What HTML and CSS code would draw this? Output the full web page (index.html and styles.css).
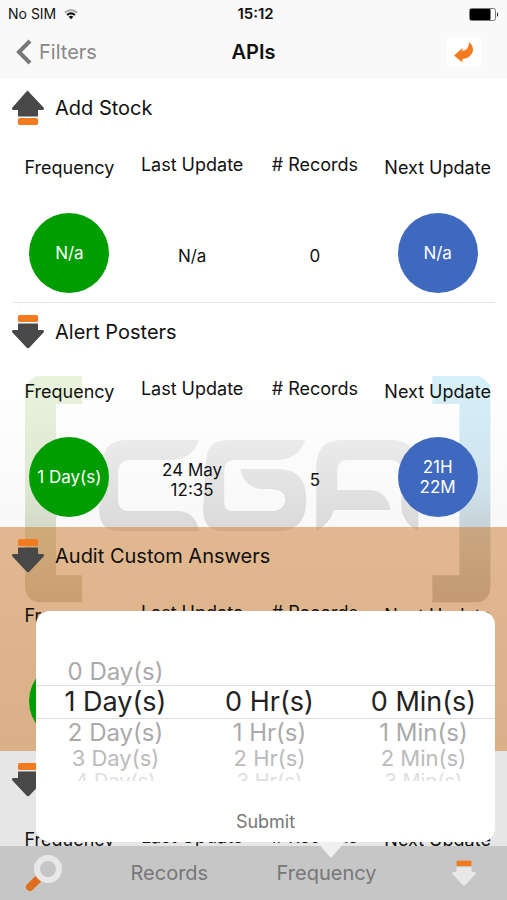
FILE: index.html
```
<!DOCTYPE html>
<html lang="en">
<head>
<meta charset="utf-8">
<meta name="viewport" content="width=device-width, initial-scale=1">
<title>APIs</title>
<link rel="stylesheet" href="styles.css">
</head>
<body>
<svg class="sprites" aria-hidden="true">
  <symbol id="arrow-up" viewBox="0 0 34 36">
    <path class="icon-body" d="M17 1 L33 18 Q33.500 20 31.500 20 H27 V26.500 H7 V20 H2.500 Q.5 20 1 18 L15.500 1.500 Q17 .2 18.500 1.500Z"/>
    <rect class="icon-accent" x="7" y="28" width="20" height="7" rx="1.500"/>
  </symbol>
  <symbol id="arrow-down" viewBox="0 0 34 36">
    <rect class="icon-accent" x="7" y="1" width="20" height="7" rx="1.500"/>
    <path class="icon-body" d="M7 9.500 H27 V16 H31.500 Q33.500 16 33 18 L18.500 33.500 Q17 34.800 15.500 33.500 L1 18 Q.5 16 2.500 16 H7Z"/>
  </symbol>
</svg>
<div class="app">
  <header class="header">
    <div class="status">
      <span class="carrier">No SIM
        <svg class="wifi" viewBox="0 0 14 11" aria-hidden="true"><path class="wifi-faint" d="M.8 3.800 Q7 -1.500 13.200 3.800"/><path class="wifi-on" d="M3 6 Q7 2.700 11 6"/><path d="M4.600 7.700 Q7 5.700 9.400 7.700 L7 10.300Z"/></svg>
      </span>
      <time class="clock">15:12</time>
      <svg class="battery" viewBox="0 0 30 13" aria-hidden="true"><rect class="battery-shell" x=".5" y=".5" width="26" height="12" rx="2"/><rect x="1" y="1" width="20.500" height="11" rx="1"/><path d="M28 4 Q30 6.500 28 9Z"/></svg>
    </div>
    <nav class="nav">
      <button class="back" type="button"><svg class="chevron" viewBox="0 0 16 26" aria-hidden="true"><path d="M14 2 L3 13 L14 24"/></svg>Filters</button>
      <h1 class="title">APIs</h1>
      <button class="reply" type="button" aria-label="Reset"><svg viewBox="0 0 22 22" aria-hidden="true"><path class="icon-accent" d="M1 14.500 L9.500 7 V10 Q16.500 8.500 16 1 Q20.500 4.500 20 10 Q18 17 9.500 18 V21.500Z"/></svg></button>
    </nav>
  </header>

  <main class="list">
    <svg class="watermark" viewBox="24 376 466 227" aria-hidden="true">
      <defs>
        <linearGradient id="lime" x1="0" y1="0" x2="0" y2="1"><stop offset="0" stop-color="#eaf3dc"/><stop offset=".5" stop-color="#dde6d2"/><stop offset="1" stop-color="#c2c2b8"/></linearGradient>
        <linearGradient id="sky" x1="0" y1="0" x2="0" y2="1"><stop offset="0" stop-color="#d6f1f9"/><stop offset=".5" stop-color="#cfe2ea"/><stop offset="1" stop-color="#b4b4b6"/></linearGradient>
        <linearGradient id="steel" x1="0" y1="0" x2="0" y2="1"><stop offset="0" stop-color="#ebebeb"/><stop offset="1" stop-color="#d9d9d9"/></linearGradient>
      </defs>
      <path fill="url(#lime)" d="M81 376 H36 Q32 376 24 386 V588 Q26 601 38 602 H81 V575 H55 V404 H81Z"/>
      <path fill="url(#sky)" d="M431 376 H477 Q481 376 489 386 V588 Q487 601 476 602 H431 V575 H458 V404 H431Z"/>
      <path fill="url(#steel)" d="M198 440 H125 Q104 440 102 460 L98 508 Q97 531 119 531 H198 Q194 511 176 511 H128 Q117 511 117 500 V471 Q118 460 130 460 H172 Q192 458 198 440Z"/>
      <path fill="url(#steel)" d="M304 440 H227 Q206 440 205 460 L202 508 Q201 531 222 531 H277 Q305 531 305 500 Q305 469 277 469 H239 Q244 489 262 489 H270 Q284 490 284 500 Q283 511 270 511 H232 Q223 511 223 503 V471 Q223 460 234 460 H278 Q298 458 304 440Z"/>
      <path fill="url(#steel)" d="M315 531 V466 Q316 440 340 440 H392 Q416 441 417 468 V531 Q400 522 400 505 V471 Q399 460 388 460 H347 Q336 460 336 471 V490 H368 Q386 491 389 510 H333 Q328 524 315 531Z"/>
    </svg>

    <article class="api">
      <h2 class="api-name"><svg class="api-icon" aria-hidden="true"><use href="#arrow-up"/></svg>Add Stock</h2>
      <table class="stats">
        <thead><tr><th>Frequency</th><th>Last Update</th><th># Records</th><th>Next Update</th></tr></thead>
        <tbody><tr><td><span class="disc disc-green">N/a</span></td><td>N/a</td><td>0</td><td><span class="disc disc-blue">N/a</span></td></tr></tbody>
      </table>
    </article>

    <article class="api">
      <h2 class="api-name"><svg class="api-icon" aria-hidden="true"><use href="#arrow-down"/></svg>Alert Posters</h2>
      <table class="stats">
        <thead><tr><th>Frequency</th><th>Last Update</th><th># Records</th><th>Next Update</th></tr></thead>
        <tbody><tr><td><span class="disc disc-green">1 Day(s)</span></td><td>24 May<br>12:35</td><td>5</td><td><span class="disc disc-blue">21H<br>22M</span></td></tr></tbody>
      </table>
    </article>

    <article class="api api-selected">
      <h2 class="api-name"><svg class="api-icon" aria-hidden="true"><use href="#arrow-down"/></svg>Audit Custom Answers</h2>
      <table class="stats">
        <thead><tr><th>Frequency</th><th>Last Update</th><th># Records</th><th>Next Update</th></tr></thead>
        <tbody><tr><td><span class="disc disc-green"></span></td><td></td><td></td><td></td></tr></tbody>
      </table>
    </article>

    <article class="api">
      <h2 class="api-name"><svg class="api-icon" aria-hidden="true"><use href="#arrow-down"/></svg></h2>
      <table class="stats">
        <thead><tr><th>Frequency</th><th>Last Update</th><th># Records</th><th>Next Update</th></tr></thead>
      </table>
    </article>
  </main>

  <footer class="footer">
    <form class="popover">
      <div class="picker">
        <ul class="wheel" role="listbox" aria-label="Days">
          <li class="near" role="option">0 Day(s)</li>
          <li class="current" role="option" aria-selected="true">1 Day(s)</li>
          <li class="near" role="option">2 Day(s)</li>
          <li class="far" role="option">3 Day(s)</li>
          <li class="edge" role="option">4 Day(s)</li>
        </ul>
        <ul class="wheel" role="listbox" aria-label="Hours">
          <li class="near" role="presentation"></li>
          <li class="current" role="option" aria-selected="true">0 Hr(s)</li>
          <li class="near" role="option">1 Hr(s)</li>
          <li class="far" role="option">2 Hr(s)</li>
          <li class="edge" role="option">3 Hr(s)</li>
        </ul>
        <ul class="wheel" role="listbox" aria-label="Minutes">
          <li class="near" role="presentation"></li>
          <li class="current" role="option" aria-selected="true">0 Min(s)</li>
          <li class="near" role="option">1 Min(s)</li>
          <li class="far" role="option">2 Min(s)</li>
          <li class="edge" role="option">3 Min(s)</li>
        </ul>
      </div>
      <button class="submit" type="button">Submit</button>
    </form>
    <nav class="tabs">
      <button class="tab tab-icon" type="button" aria-label="Search"><svg class="search" viewBox="0 0 38 38" aria-hidden="true"><path class="search-handle" d="M6 33 L13 26"/><circle class="search-ring" cx="24" cy="15" r="11"/></svg></button>
      <button class="tab" type="button">Records</button>
      <button class="tab" type="button">Frequency</button>
      <button class="tab tab-icon" type="button" aria-label="Download"><svg class="download" aria-hidden="true"><use href="#arrow-down"/></svg></button>
    </nav>
  </footer>
</div>
</body>
</html>
```
FILE: styles.css
```
* { box-sizing: border-box; }

body {
  margin: 0;
  font-family: Inter, Roboto, "Liberation Sans", sans-serif;
  font-size: 17px;
  line-height: 20px;
  color: #111;
}

button {
  padding: 0;
  border: 0;
  background: none;
  font: inherit;
  color: #777;
}

.sprites { display: none; }
.icon-body { fill: var(--icon-body, #484848); }
.icon-accent { fill: #f47a20; }

.app {
  display: flex;
  flex-direction: column;
  height: 100vh;
  overflow: hidden;
}

/* Header */
.header {
  position: relative;
  flex: none;
  background: #f9f9f9;
  box-shadow: 0 1px 0 #e6e6e6;
}

.status {
  display: grid;
  grid-template-columns: 1fr auto 1fr;
  align-items: center;
  height: 28px;
  padding: 0 8px;
  font-size: 14px;
}

.carrier { display: flex; align-items: center; gap: 8px; }
.wifi { width: 14px; height: 11px; }
.wifi path { fill: #111; }
.wifi .wifi-on { fill: none; stroke: #111; stroke-width: 2; }
.wifi .wifi-faint { fill: none; stroke: #aaa; stroke-width: 2; }
.clock { padding-left: 4px; font-size: 15px; font-weight: 600; }
.battery { width: 30px; height: 13px; justify-self: end; }
.battery-shell { fill: #fff; stroke: #777; }

.nav {
  display: grid;
  grid-template-columns: 1fr auto 1fr;
  align-items: center;
  height: 51px;
  padding: 0 16px 3px;
}

.back {
  display: flex;
  align-items: center;
  gap: 7px;
  font-size: 20px;
  color: #888;
}

.chevron { width: 16px; height: 26px; }
.chevron path { fill: none; stroke: #777; stroke-width: 4; }
.title { margin: 0; font-size: 20px; font-weight: 600; }

.reply {
  display: grid;
  place-items: center;
  justify-self: end;
  width: 34px;
  height: 30px;
  margin-right: 10px;
  background: #fff;
}

.reply svg { width: 22px; height: 22px; }

/* List */
.list {
  position: relative;
  flex: 1;
  min-height: 0;
  overflow: hidden;
  background: linear-gradient(#fff 0, #fff 300px, #f8f8f9 448px, #e6e6e7 672px);
}

.watermark {
  position: absolute;
  top: 297px;
  left: 5%;
  width: 92%;
}

.api {
  position: relative;
  height: 224px;
  padding: 0 8px;
}

.api::after {
  content: "";
  display: block;
  height: 1px;
  margin: 0 4px;
  background: #e6e6e8;
}

.api-selected { background: rgb(205 131 56 / 55%); }
.api-selected::after, .api:nth-of-type(2)::after { background: none; }

.api-name {
  display: flex;
  align-items: center;
  gap: 10px;
  height: 58px;
  margin: 0;
  padding-left: 3px;
  font-size: 20px;
  font-weight: 400;
}

.api-icon { width: 34px; height: 36px; }

.stats {
  width: 100%;
  table-layout: fixed;
  border-collapse: collapse;
  text-align: center;
}

.stats th { height: 62px; padding: 0; font-size: 18px; font-weight: 400; }
.stats th:nth-child(2), .stats th:nth-child(3) { padding-bottom: 6px; }
.stats td { height: 103px; padding: 10px 0 0; }
.stats td:first-child, .stats td:last-child { padding: 5px 0 0; }

.disc {
  display: grid;
  place-content: center;
  width: 80px;
  height: 80px;
  margin: 0 auto;
  border-radius: 50%;
  color: #fff;
}

.disc-green { background: #009d00; }
.disc-blue { background: #3f69bf; }

/* Footer */
.footer { position: relative; flex: none; }

.tabs {
  display: flex;
  align-items: center;
  justify-content: space-between;
  height: 54px;
  padding: 0 24px;
  background: #c6c6c6;
}

.tab { font-size: 20px; }
.tab-icon { display: grid; place-items: center; width: 38px; }
.search { width: 38px; height: 38px; }
.search-handle { fill: none; stroke: #de6d1d; stroke-width: 8; stroke-linecap: round; }
.search-ring { fill: none; stroke: #e8e8e8; stroke-width: 6; }
.download { --icon-body: #e8e8e8; width: 26px; height: 27px; }

/* Frequency popover */
.popover {
  position: absolute;
  right: 12px;
  bottom: 58px;
  left: 36px;
  display: flex;
  flex-direction: column;
  align-items: center;
  height: 231px;
  border-radius: 14px;
  background: #fff;
}

.popover::after {
  content: "";
  position: absolute;
  top: 100%;
  left: 295px;
  width: 28px;
  height: 16px;
  margin-left: -14px;
  background: #f0f0f0;
  clip-path: polygon(0 0, 100% 0, 50% 100%);
}

.picker {
  display: grid;
  grid-template-columns: repeat(3, 154px);
  justify-content: center;
  width: 100%;
  padding: 46px 0 0 8px;
  background: linear-gradient(#ddd, #ddd) 0 74px / 100% 1px no-repeat, linear-gradient(#ddd, #ddd) 0 107px / 100% 1px no-repeat;
}

.wheel { margin: 0; padding: 0; list-style: none; text-align: center; }
.near { height: 29px; font-size: 24px; line-height: 30px; color: #aaa; }
.current { height: 32px; font-size: 27px; line-height: 32px; color: #222; }
.far { height: 24px; font-size: 22px; line-height: 22px; color: #bbb; }
.edge { height: 10px; overflow: hidden; font-size: 20px; line-height: 20px; color: #e0e0e0; }

.submit { margin-top: auto; margin-bottom: 10px; font-size: 18px; color: #777; }
```
